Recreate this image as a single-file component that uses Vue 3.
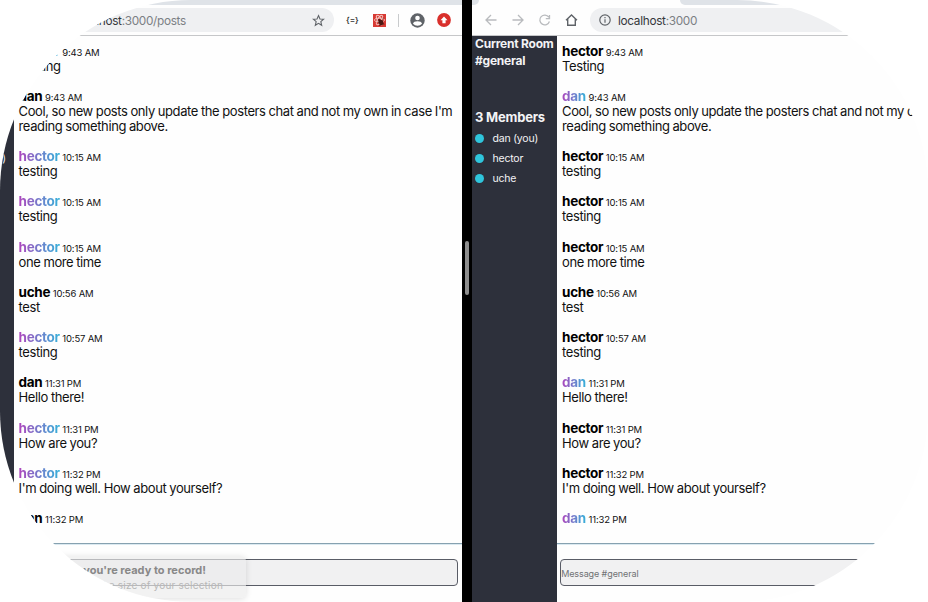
<script setup>
const posts = [
  { by: 'hector', at: '9:43 AM', lines: ['Testing'] },
  { by: 'dan', at: '9:43 AM', lines: ["Cool, so new posts only update the posters chat and not my own in case I'm", 'reading something above.'] },
  { by: 'hector', at: '10:15 AM', lines: ['testing'] },
  { by: 'hector', at: '10:15 AM', lines: ['testing'] },
  { by: 'hector', at: '10:15 AM', lines: ['one more time'] },
  { by: 'uche', at: '10:56 AM', lines: ['test'] },
  { by: 'hector', at: '10:57 AM', lines: ['testing'] },
  { by: 'dan', at: '11:31 PM', lines: ['Hello there!'] },
  { by: 'hector', at: '11:31 PM', lines: ['How are you?'] },
  { by: 'hector', at: '11:32 PM', lines: ["I'm doing well. How about yourself?"] },
  { by: 'dan', at: '11:32 PM', lines: [] },
]
const members = ['dan', 'hector', 'uche']
const windows = [
  { me: 'hector', path: ':3000/posts', side: 'left', placeholder: '' },
  { me: 'dan', path: ':3000', side: 'right', placeholder: 'Message #general' },
]
</script>

<template>
  <main class="screen">
    <template v-for="w in windows" :key="w.me">
      <div v-if="w.side === 'right'" class="divider"><span class="grip"></span></div>
      <section class="window" :class="w.side">
        <div class="tabs"><span class="tab"></span><span class="strip"></span></div>
        <div class="toolbar">
          <svg class="nav" viewBox="0 0 108 24" fill="none" stroke="#b9bbbe" stroke-width="1.3">
            <path d="M24.5 12H14M19 7l-5 5 5 5M40.500 12H51M46 7l5 5-5 5" />
            <path d="M76.800 9.200A4.900 4.900 0 1 0 77.400 13.500M77.500 7v3.700h-3.700" />
            <path d="M94 12.200l5.500-5.200 5.500 5.200M95.700 11v6.200h7.600V11" stroke="#5f6368" stroke-width="1.400" />
          </svg>
          <div class="address">
            <svg class="info" viewBox="0 0 12 12" fill="none" stroke="#5f6368" stroke-width="1.200">
              <circle cx="6" cy="6" r="5.200" /><path d="M6 5.300v3.500M6 3v1.300" />
            </svg>
            <span class="url"><b>localhost</b>{{ w.path }}</span>
            <svg v-if="w.side === 'left'" class="star" viewBox="0 0 24 24" fill="none" stroke="#5f6368" stroke-width="2">
              <path d="M12 2.800l2.700 6.300 6.800.6-5.200 4.500 1.600 6.700L12 17.300l-5.900 3.600 1.600-6.700-5.200-4.500 6.800-.6z" />
            </svg>
          </div>
          <div v-if="w.side === 'left'" class="extensions">
            <span class="json">{=}</span>
            <svg class="react" viewBox="0 0 13 13">
              <rect width="13" height="13" fill="#d83a34" />
              <g fill="none" stroke="#f3c5c0" stroke-width=".9">
                <ellipse cx="6.500" cy="6" rx="5.200" ry="2" />
                <ellipse cx="6.500" cy="6" rx="5.200" ry="2" transform="rotate(60 6.500 6)" />
                <ellipse cx="6.500" cy="6" rx="5.200" ry="2" transform="rotate(120 6.500 6)" />
              </g>
              <path d="M5.500 5l4.500 1.500.5 4-3 1-2-2.500z" fill="#4b1712" />
              <path d="M4.800 6.200l2-.8M9.500 5l1.300-1M5 9l1.600-.6M10 9.500l1.400.7M7 10.500L6.500 12" stroke="#4b1712" stroke-width=".8" />
            </svg>
            <span class="bar"></span>
            <svg class="user" viewBox="0 0 15 15">
              <circle cx="7.500" cy="7.500" r="7.200" fill="#5f6368" />
              <circle cx="7.500" cy="5" r="2.300" fill="#fff" />
              <path d="M3 10.800c.2-3.300 8.800-3.300 9 0a6 6 0 0 1-9 0z" fill="#fff" />
            </svg>
            <svg class="update" viewBox="0 0 14 14">
              <circle cx="7" cy="7" r="6.900" fill="#d9302c" />
              <path d="M7 3.500l3.500 3.800H8.600v2.900H5.400V7.300H3.500z" fill="#fff" />
            </svg>
          </div>
        </div>
        <div class="body">
          <aside class="sidebar">
            <h2>Current Room<br />#general</h2>
            <h3>3 Members</h3>
            <ul>
              <li v-for="m in members" :key="m"><i></i>{{ m }}{{ m === w.me ? ' (you)' : '' }}</li>
            </ul>
          </aside>
          <div class="chat">
            <div class="posts">
              <article v-for="(p, i) in posts" :key="i">
                <header><strong :class="{ own: p.by === w.me }">{{ p.by }}</strong><time>{{ p.at }}</time></header>
                <p v-for="l in p.lines" :key="l">{{ l }}</p>
              </article>
            </div>
            <footer><div class="field">{{ w.placeholder }}</div></footer>
          </div>
        </div>
      </section>
    </template>
    <div class="toast">
      <strong>you're ready to record!</strong>
      <span>the size of your selection</span>
    </div>
  </main>
</template>

<style>
body { margin: 0; background: #fff; }
</style>

<style scoped>
* { box-sizing: border-box; }
.screen {
  position: relative;
  display: flex;
  width: 928px;
  height: 602px;
  overflow: hidden;
  border-radius: 191px;
  background: #fefefe;
  font-family: Inter, "Liberation Sans", sans-serif;
  color: #111;
}
.window { display: flex; flex-direction: column; flex: none; width: 534px; height: 602px; }
.window.left { margin-left: -72px; }
.divider { flex: none; display: flex; justify-content: center; align-items: flex-start; width: 10px; height: 602px; padding-top: 241px; background: #000; }
.grip { width: 4px; height: 54px; border-radius: 2px; background: #8d8d8d; }
.tabs { display: flex; flex: none; height: 5px; background: #dfe3e8; }
.right .tabs { background: #fefefe; }
.right .tab { width: 7px; margin-right: 201px; background: #dfe3e8; border-bottom-right-radius: 7px; }
.right .strip { flex: 1; background: #dfe3e8; border-bottom-left-radius: 7px; }
.toolbar { display: flex; flex: none; height: 31px; padding-top: 3px; border-bottom: 1px solid #c6c7c9; background: #fefefe; }
.nav { flex: none; width: 108px; height: 24px; margin-right: 10px; }
.address { display: flex; align-items: center; flex: 1; height: 24px; padding: 0 9px; border-radius: 12px; background: #eff0f2; }
.left .address { flex: none; width: 288px; }
.info { width: 12px; height: 12px; margin: 0 7px 0 0; }
.url { flex: 1; padding-top: 1px; color: #7b7f84; font-size: 11.800px; letter-spacing: -0.310px; }
.url b { color: #35373b; font-weight: 400; }
.star { width: 13px; height: 13px; }
.extensions { display: flex; align-items: center; height: 24px; }
.json { width: 13px; margin: 0 13.500px 0 12px; color: #333; font-size: 8px; font-weight: 600; }
.react { width: 13px; height: 13px; margin-right: 12px; }
.bar { width: 1px; height: 13px; margin-right: 11px; background: #c9cbcd; }
.user { width: 15px; height: 15px; margin-right: 12px; }
.update { width: 14px; height: 14px; }
.body { display: flex; flex: 1; min-height: 0; }
.sidebar { flex: none; width: 85px; padding-left: 3px; background: #2d303b; color: #f3f3f5; white-space: nowrap; }
.left .sidebar { width: 85.500px; padding-left: 2px; }
h2 { margin: 0 0 40px; font-size: 12px; line-height: 16.500px; font-weight: 700; letter-spacing: -0.220px; }
h3 { margin: 0 0 2.500px; font-size: 13px; line-height: 17px; font-weight: 700; letter-spacing: -0.200px; }
ul { margin: 0; padding: 0; list-style: none; }
li { display: flex; align-items: center; height: 20px; font-size: 10.500px; letter-spacing: -0.200px; }
li i { width: 9px; height: 9px; margin-right: 8.500px; border-radius: 50%; background: #2fc5dc; }
.chat { display: flex; flex-direction: column; flex: 1; min-width: 0; }
.posts { flex: 1; min-height: 0; overflow: hidden; padding: 7.600px 0 0 5.100px; white-space: nowrap; }
article { margin-bottom: 15.080px; }
header { display: flex; align-items: baseline; gap: 2.700px; height: 15.080px; line-height: 15.080px; }
header strong { color: #000; font-size: 13.500px; font-weight: 700; letter-spacing: -0.320px; }
header strong.own { color: transparent; background: linear-gradient(90deg, #ae46bd, #34b2da); background-clip: text; -webkit-background-clip: text; }
time { font-size: 9.500px; letter-spacing: -0.180px; }
p { margin: 0; height: 15.080px; font-size: 13px; line-height: 15.080px; letter-spacing: -0.400px; word-spacing: -0.280px; }
footer { flex: none; height: 59px; padding: 15px 4px 0 3.200px; border-top: 1px solid #86a1b0; box-shadow: inset 0 1px #dbe9f0; }
.field { display: flex; align-items: center; height: 27px; border: 1px solid #595c66; border-radius: 4px; background: #f1f1f2; color: #707174; font-size: 9px; letter-spacing: -0.100px; padding-top: 1px; }
.toast {
  position: absolute;
  left: 20px;
  top: 556px;
  display: flex;
  flex-direction: column;
  align-items: flex-end;
  width: 226px;
  height: 42px;
  padding-top: 7px;
  border-radius: 5px;
  background: rgba(235, 235, 235, 0.650);
  box-shadow: 0 1px 6px rgba(0, 0, 0, 0.130);
  white-space: nowrap;
}
.toast strong { margin-right: 40px; color: #888; font-size: 11px; line-height: 15px; font-weight: 700; }
.toast span { margin-right: 23px; color: #b8b8b8; font-size: 10px; line-height: 14px; letter-spacing: 0.200px; }
</style>
